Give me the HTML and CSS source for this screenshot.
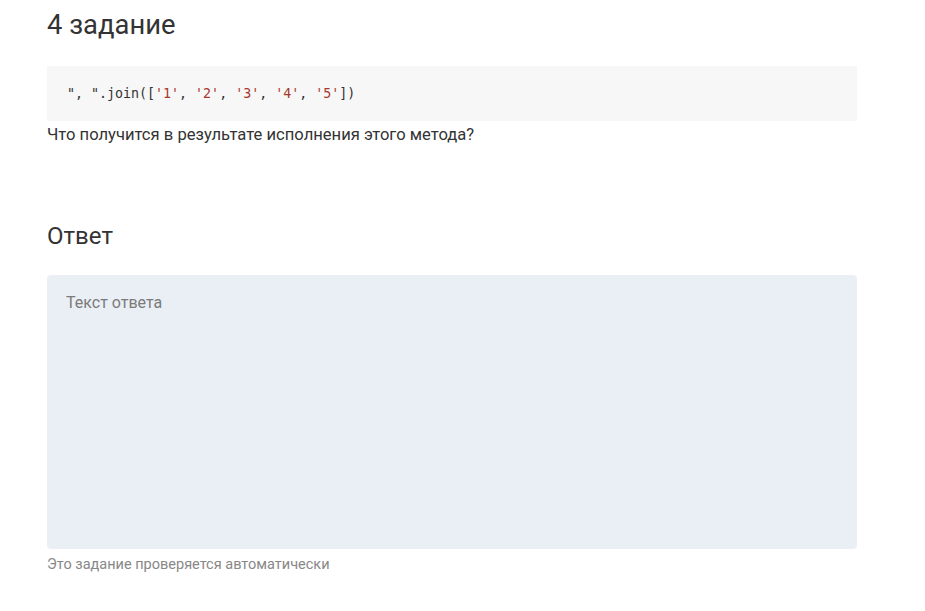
FILE: index.html
```html
<!DOCTYPE html>
<html lang="ru">
<head>
<meta charset="utf-8">
<link rel="stylesheet" href="styles.css">
</head>
<body>
<div class="page">
  <h1 class="title">4 задание</h1>
  <pre class="code"><code>", ".join([<span class="str">'1'</span>, <span class="str">'2'</span>, <span class="str">'3'</span>, <span class="str">'4'</span>, <span class="str">'5'</span>])</code></pre>
  <p class="question">Что получится в результате исполнения этого метода?</p>
  <h2 class="answer-title">Ответ</h2>
  <textarea class="answer" placeholder="Текст ответа"></textarea>
  <p class="note">Это задание проверяется автоматически</p>
</div>
</body>
</html>
```
FILE: styles.css
```css
html, body {
  margin: 0;
  padding: 0;
  background: #fff;
}
body {
  font-family: Roboto, "Noto Sans", sans-serif;
  color: #333;
}
.page {
  width: 810px;
  padding-left: 47px;
  display: flex;
  flex-direction: column;
}
.title {
  margin: 7px 0 0;
  font-size: 27.4px;
  font-weight: 400;
  line-height: 36px;
  color: #333;
}
.code {
  margin: 23px 0 0;
  height: 55px;
  box-sizing: border-box;
  padding: 19px 20px 0;
  background: #f7f7f7;
  font-family: "DejaVu Sans Mono", monospace;
  font-size: 13.3px;
  line-height: 18px;
  color: #333;
}
.str {
  color: #a8382c;
}
.question {
  margin: 3px 0 0;
  font-size: 16.6px;
  line-height: 22px;
}
.answer-title {
  margin: 75px 0 0;
  font-size: 24px;
  font-weight: 400;
  line-height: 30px;
  color: #333;
}
.answer {
  margin: 24px 0 0;
  width: 810px;
  height: 274px;
  box-sizing: border-box;
  padding: 18px 19px;
  border: none;
  border-radius: 4px;
  background: #eaeff5;
  font-family: Roboto, "Noto Sans", sans-serif;
  font-size: 16px;
  line-height: 20px;
  color: #333;
  resize: none;
  outline: none;
  display: block;
}
.answer::placeholder {
  color: #7a7a7a;
}
.note {
  margin: 6px 0 0;
  font-size: 14.5px;
  line-height: 20px;
  color: #888;
}
```
